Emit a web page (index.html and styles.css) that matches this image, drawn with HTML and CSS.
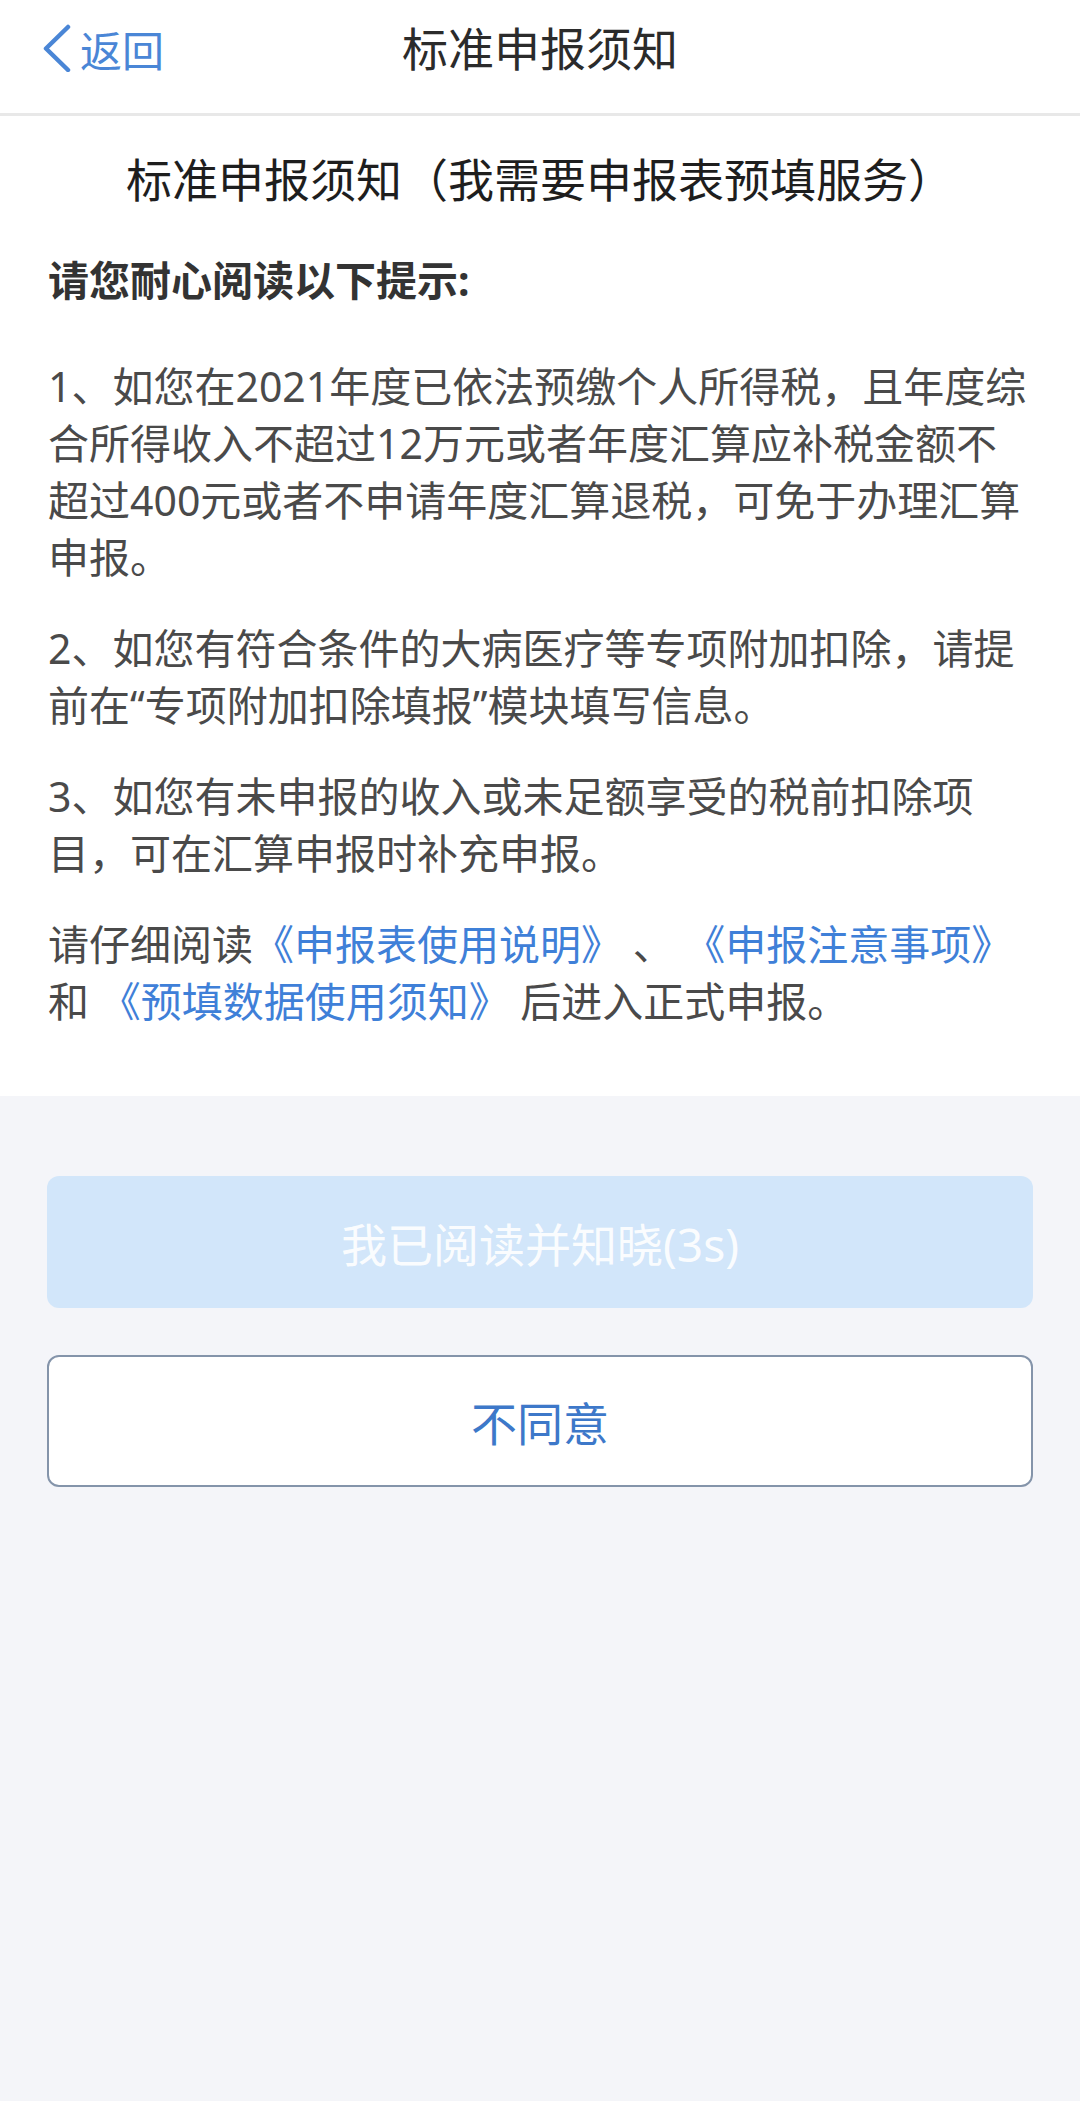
FILE: index.html
```html
<!DOCTYPE html>
<html lang="zh-CN">

<head>
    <meta charset="UTF-8">
    <meta name="viewport" content="width=device-width, initial-scale=1.0">
    <title>标准申报须知</title>
    <link rel="stylesheet" href="styles.css">
</head>

<body>
    <div class="nav">
        <a class="back" href="#">
            <svg class="back-icon" width="30" height="48" viewBox="0 0 30 48">
                <polyline points="26,3 4,24.5 26,46" fill="none" stroke="#4a86d6" stroke-width="4.5"
                    stroke-linecap="round" stroke-linejoin="round" />
            </svg>
            <span>返回</span>
        </a>
        <div class="nav-title">标准申报须知</div>
    </div>

    <div class="notice">
        <h1 class="notice-title">标准申报须知（我需要申报表预填服务）</h1>
        <h2 class="notice-head">请您耐心阅读以下提示:</h2>
        <p>1、如您在2021年度已依法预缴个人所得税，且年度综合所得收入不超过12万元或者年度汇算应补税金额不超过400元或者不申请年度汇算退税，可免于办理汇算申报。</p>
        <p>2、如您有符合条件的大病医疗等专项附加扣除，请提前在“专项附加扣除填报”模块填写信息。</p>
        <p>3、如您有未申报的收入或未足额享受的税前扣除项目，可在汇算申报时补充申报。</p>
        <p>请仔细阅读<a href="#">《申报表使用说明》</a> 、 <a href="#">《申报注意事项》</a> 和 <a href="#">《预填数据使用须知》</a> 后进入正式申报。</p>
    </div>

    <div class="actions">
        <button type="button" class="btn btn-primary" disabled>我已阅读并知晓(3s)</button>
        <button type="button" class="btn btn-plain">不同意</button>
    </div>
</body>

</html>
```

FILE: styles.css
```css
body {
    background-color: #f4f5f9;
    color: #4a4a4a;
    font-family: "Noto Sans", "Noto Sans CJK SC", sans-serif;
    margin: 0;
    padding: 0;
    min-height: 2101px;
}

.nav {
    position: relative;
    height: 113px;
    background-color: #fff;
    border-bottom: 3px solid #e8e8e8;
    box-sizing: content-box;
}

.back {
    position: absolute;
    left: 42px;
    top: 14px;
    height: 68px;
    display: flex;
    align-items: center;
    gap: 8px;
    color: #4a86d6;
    text-decoration: none;
    font-size: 42px;
}

.back-icon {
    display: block;
}

.nav-title {
    padding-top: 14px;
    line-height: 68px;
    text-align: center;
    font-size: 46px;
    color: #2b2b2b;
}

.notice {
    background-color: #fff;
    padding: 29px 48px 66px;
}

.notice-title {
    margin: 0;
    font-size: 46px;
    font-weight: normal;
    line-height: 68px;
    text-align: center;
    color: #1e1e1e;
}

.notice-head {
    margin: 39px 0 50px;
    font-size: 41px;
    font-weight: bold;
    line-height: 56px;
    color: #333;
}

.notice p {
    margin: 0 0 34px;
    font-size: 41px;
    line-height: 57px;
}

.notice p:last-child {
    margin-bottom: 0;
}

.notice a {
    color: #3f80d8;
    text-decoration: none;
}

.actions {
    padding: 80px 47px 0;
    display: flex;
    flex-direction: column;
    gap: 47px;
}

.btn {
    height: 132px;
    border-radius: 12px;
    font-family: inherit;
    font-size: 46px;
    cursor: pointer;
}

.btn-primary {
    background-color: #d2e6fa;
    border: none;
    color: rgba(255, 255, 255, 0.92);
}

.btn-plain {
    background-color: #fff;
    border: 2px solid #8494aa;
    color: #3d78c9;
}
```
